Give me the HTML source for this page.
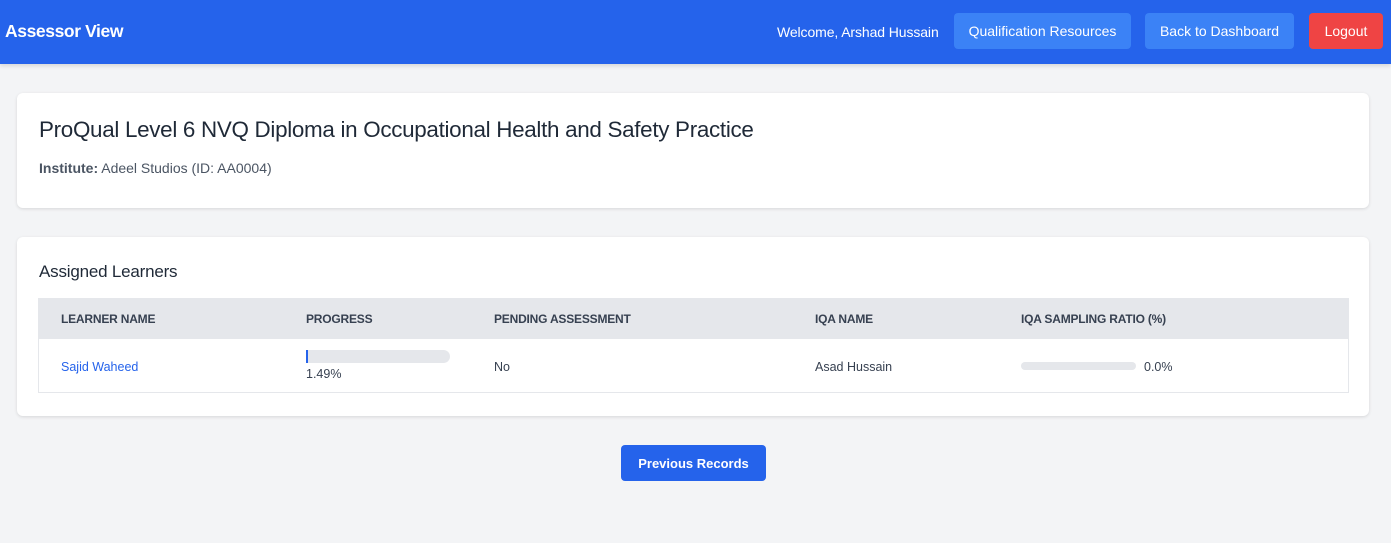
<!DOCTYPE html>
<html><head><style>
*{margin:0;padding:0;box-sizing:border-box}
body{width:1391px;height:543px;background:#f3f4f6;font-family:"Liberation Sans",sans-serif;color:#1f2937;position:relative;overflow:hidden}
.nav{position:absolute;left:0;top:0;width:1391px;height:64px;background:#2563eb;box-shadow:0 2px 4px rgba(0,0,0,.12)}
.abs{position:absolute;white-space:nowrap}
.btn{position:absolute;top:13px;height:36px;border-radius:4px;color:#fff;font-size:14px;line-height:37px;text-align:center}
.card{position:absolute;left:17px;width:1352px;background:#fff;border-radius:6px;box-shadow:0 1px 3px rgba(0,0,0,.12)}
.th{position:absolute;top:312px;font-size:12px;font-weight:bold;color:#374151;letter-spacing:-0.2px}
.td{position:absolute;top:360px;font-size:12.5px;color:#374151}
</style></head><body>
<div class="nav">
<div class="abs" style="left:5px;top:21px;font-size:17.5px;font-weight:bold;color:#fff;letter-spacing:-0.4px">Assessor View</div>
<div class="abs" style="left:777px;top:24px;font-size:14px;color:#fff;letter-spacing:-0.1px">Welcome, Arshad Hussain</div>
<div class="btn" style="left:954px;width:177px;background:#3b82f6">Qualification Resources</div>
<div class="btn" style="left:1145px;width:149px;background:#3b82f6">Back to Dashboard</div>
<div class="btn" style="left:1309px;width:74px;background:#ef4444">Logout</div>
</div>
<div class="card" style="top:93px;height:115px"></div>
<div class="abs" style="left:39px;top:117px;font-size:22.4px;color:#1f2937;letter-spacing:-0.3px">ProQual Level 6 NVQ Diploma in Occupational Health and Safety Practice</div>
<div class="abs" style="left:39px;top:160px;font-size:14px;color:#4b5563"><b>Institute:</b> Adeel Studios (ID: AA0004)</div>
<div class="card" style="top:237px;height:179px"></div>
<div class="abs" style="left:39px;top:262px;font-size:17px;color:#1f2937;letter-spacing:-0.2px">Assigned Learners</div>
<div class="abs" style="left:38px;top:298px;width:1311px;height:95px;border:1px solid #e5e7eb"></div>
<div class="abs" style="left:38px;top:298px;width:1311px;height:41px;background:#e5e7eb"></div>
<div class="th" style="left:61px">LEARNER NAME</div>
<div class="th" style="left:306px">PROGRESS</div>
<div class="th" style="left:494px">PENDING ASSESSMENT</div>
<div class="th" style="left:815px">IQA NAME</div>
<div class="th" style="left:1021px">IQA SAMPLING RATIO (%)</div>
<div class="td" style="left:61px;color:#2563eb">Sajid Waheed</div>
<div class="abs" style="left:306px;top:350px;width:144px;height:13px;border-radius:0 7px 7px 0;background:#e5e7eb;overflow:hidden"><div style="width:2px;height:13px;background:#2563eb"></div></div>
<div class="abs" style="left:306px;top:367px;font-size:12.5px;color:#374151">1.49%</div>
<div class="td" style="left:494px">No</div>
<div class="td" style="left:815px">Asad Hussain</div>
<div class="abs" style="left:1021px;top:362px;width:115px;height:8px;border-radius:4px;background:#e5e7eb"></div>
<div class="td" style="left:1144px">0.0%</div>
<div class="abs" style="left:621px;top:445px;width:145px;height:36px;background:#2563eb;border-radius:4px;color:#fff;font-size:13px;font-weight:bold;text-align:center;line-height:37px">Previous Records</div>
</body></html>
